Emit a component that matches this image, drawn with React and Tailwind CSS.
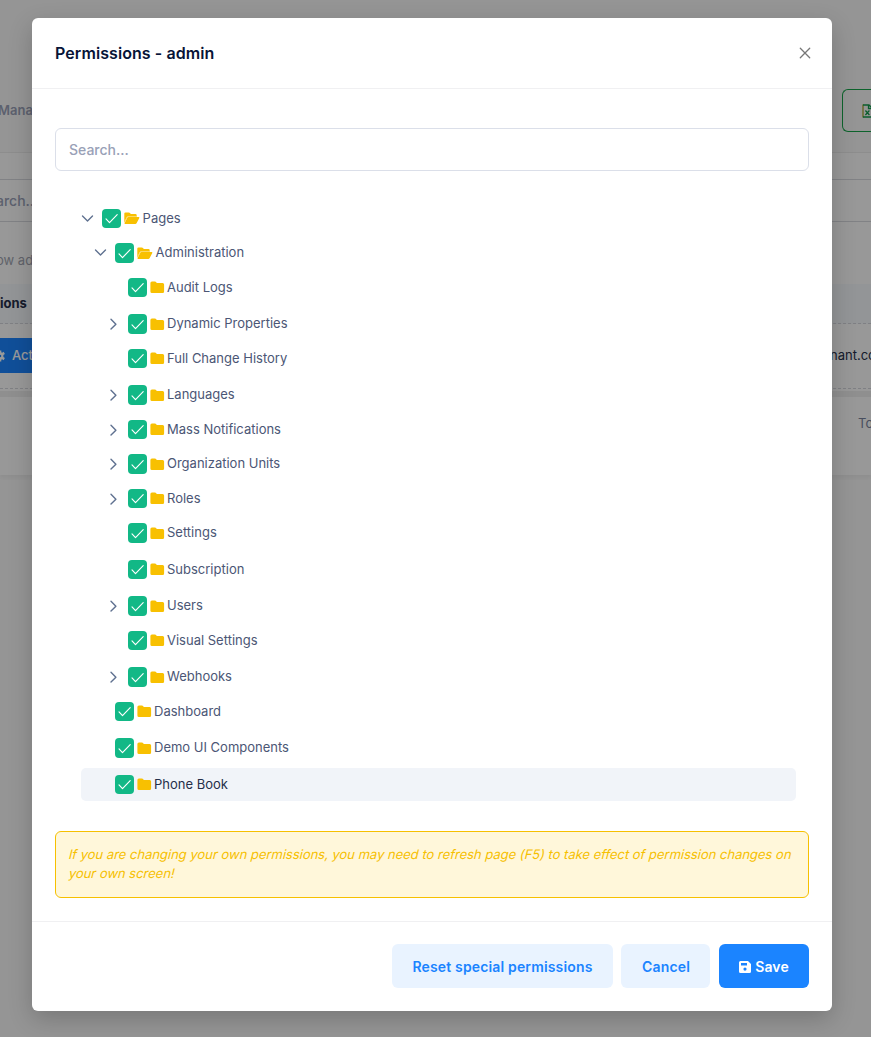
import React from "react";

const rows = [
  { label: "Pages", depth: "pl-0", h: "h-[34px]", box: "h-[19px]", state: "open" },
  { label: "Administration", depth: "pl-[13px]", h: "h-[35px]", box: "h-5", state: "open" },
  { label: "Audit Logs", depth: "pl-[26px]", h: "h-[36px]", box: "h-[19px]", state: "leaf" },
  { label: "Dynamic Properties", depth: "pl-[26px]", h: "h-[35px]", box: "h-5", state: "closed" },
  { label: "Full Change History", depth: "pl-[26px]", h: "h-[36px]", box: "h-[19px]", state: "leaf" },
  { label: "Languages", depth: "pl-[26px]", h: "h-[35px]", box: "h-5", state: "closed" },
  { label: "Mass Notifications", depth: "pl-[26px]", h: "h-[34px]", box: "h-[19px]", state: "closed" },
  { label: "Organization Units", depth: "pl-[26px]", h: "h-[35px]", box: "h-5", state: "closed" },
  { label: "Roles", depth: "pl-[26px]", h: "h-[34px]", box: "h-[19px]", state: "closed" },
  { label: "Settings", depth: "pl-[26px]", h: "h-[37px]", box: "h-5", state: "leaf" },
  { label: "Subscription", depth: "pl-[26px]", h: "h-[36px]", box: "h-[19px]", state: "leaf" },
  { label: "Users", depth: "pl-[26px]", h: "h-[35px]", box: "h-5", state: "closed" },
  { label: "Visual Settings", depth: "pl-[26px]", h: "h-[36px]", box: "h-[19px]", state: "leaf" },
  { label: "Webhooks", depth: "pl-[26px]", h: "h-[35px]", box: "h-5", state: "closed" },
  { label: "Dashboard", depth: "pl-[13px]", h: "h-[36px]", box: "h-[19px]", state: "leaf" },
  { label: "Demo UI Components", depth: "pl-[13px]", h: "h-[30px]", box: "h-5", state: "leaf" },
];

function Arrow({ state }) {
  if (state === "leaf") return <span className="w-[21px] shrink-0" />;
  return (
    <svg className="mr-2 h-[19px] w-[13px] shrink-0" viewBox="0 0 13 19" fill="none" stroke="#5f7190" strokeWidth="1.4" strokeLinecap="round" strokeLinejoin="round">
      {state === "open" ? <path d="M1.500 7l5 5 5-5" /> : <path d="M4 5.300l4.900 4.900L4 15.100" />}
    </svg>
  );
}

function Folder({ open, tall }) {
  const top = tall ? "mt-[4px] " : "mt-[3px] ";
  return open ? (
    <svg className={top + "ml-[3px] h-[13px] w-4 shrink-0"} viewBox="0 0 16 13">
      <path fill="#f8c001" d="M.3 10.700V1.600Q.3.400 1.500.400h3.100q.6 0 1 .4L6.900 2h4.600q1.200 0 1.200 1.200v1.200H4.500Q3.300 4.400 2.700 5.500z" />
      <path fill="#fbd968" d="M12.700 4H4.500Q3.200 4 2.600 5.200L.3 9.400v1.300l3-4.900q.4-.7 1.300-.7h8.100z" />
      <path fill="#f8c001" d="M4.600 5h10.100q1 0 .6.900l-2.600 5q-.5 1-1.500 1H1.200q-1.100 0-.6-1l2.600-5Q3.700 5 4.600 5z" />
    </svg>
  ) : (
    <svg className={top + "ml-[3px] h-[13px] w-[15px] shrink-0"} viewBox="0 0 15 13">
      <path fill="#f8c001" d="M.4 1.900Q.4.400 1.900.400h2.800q.6 0 1 .4L6.900 2h5.700q1.500 0 1.500 1.500v7q0 1.500-1.500 1.500H1.900Q.4 12 .4 10.500z" />
    </svg>
  );
}

function NodeContent({ row }) {
  return (
    <>
      <Arrow state={row.state} />
      <span className={"flex w-[19px] shrink-0 items-center justify-center rounded-[4px] bg-[#12b886] " + row.box}>
        <svg className="h-[19px] w-[19px]" viewBox="0 0 19 19" fill="none" stroke="#fff" strokeWidth="1.15" strokeLinecap="round" strokeLinejoin="round">
          <path d="M4 9.900l3.500 3.700L15.200 5.700" />
        </svg>
      </span>
      <Folder open={row.state === "open"} tall={row.box === "h-5"} />
      <span className={"text-[13px] leading-[19px] " + (row.state === "open" ? "ml-[2.6px]" : "ml-[2px]")}>{row.label}</span>
    </>
  );
}

function Backdrop() {
  return (
    <div className="flex h-full flex-col bg-[#f9f9f9] text-[13px]">
      <div className="flex h-[152px] items-start justify-between pt-[89px]">
        <span className="-ml-[2px] pt-[11px] font-semibold leading-5 text-[#99a1b7]">Mana</span>
        <span className="flex h-[43px] w-[29px] shrink-0 items-center overflow-hidden rounded-l-md border border-r-0 border-[#17a64a] pl-[19px]">
          <svg className="h-[14px] w-[11px] shrink-0" viewBox="0 0 11 14" fill="none" stroke="#129b4c" strokeWidth="1.3">
            <path stroke="#a3a531" d="M1 .5v13" />
            <path d="M1 1h6l3 3v9H1" />
            <path d="M6.500 1v3.500H10" />
            <path d="M3.400 6.500l4 4.500m0-4.500l-4 4.500" />
          </svg>
        </span>
      </div>
      <div className="flex h-[323px] shrink-0 flex-col border-t border-[#ececec] bg-[#fefefe] shadow-[0_3px_4px_rgba(0,0,0,0.05)]">
        <div className="mt-[26px] flex h-[43px] items-center border-y border-[#d8d9de] font-medium text-[#99a1b7]">
          <span className="-ml-[4px] text-[14px]">arch..</span>
        </div>
        <div className="h-[62px] pt-[28px] leading-5 text-[#a0a4b0]">
          <span className="-ml-[4px]">ow ad</span>
        </div>
        <div className="flex h-10 items-center border-b border-dashed border-[#d4d6dc] bg-[#f5f8fc] font-bold text-[#252f4a]">
          <span>ions</span>
        </div>
        <div className="flex h-[65px] items-center justify-between border-b border-dashed border-[#d4d6dc]">
          <span className="mb-px flex h-[35px] w-[110px] items-center bg-[#1b84ff] font-medium text-white">
            <svg className="mr-[7px] h-3 w-[5px]" viewBox="6 0 5 12" fill="#fff">
              <path d="M6 .5h1.300v1.800l.8.4 1.500-.9 1.300 2.100-1.500 1v2.200l1.500 1-1.300 2.100-1.500-.9-.8.4v1.800H6V7.300a1.300 1.300 0 000-2.600z" />
            </svg>
            Actions
          </span>
          <span className="w-[41px] whitespace-nowrap text-[#252f4a]">nant.co</span>
        </div>
        <div className="mt-[2px] h-[6px] shrink-0 bg-[#efefef]" />
        <div className="flex justify-end pt-4 leading-5 text-[#78829d]">
          <span className="w-[13px]">To</span>
        </div>
      </div>
    </div>
  );
}

export default function App() {
  return (
    <div className="relative h-[1037px] w-[871px] overflow-hidden font-['Inter',sans-serif]">
      <Backdrop />
      <div className="absolute inset-0 bg-black/40 px-8 pt-[18px]">
        <section className="flex h-[993px] w-[800px] flex-col rounded-md bg-white shadow-[0_8px_24px_rgba(0,0,0,0.2)]">
          <header className="flex h-[71px] shrink-0 items-center justify-between border-b border-[#f0f0f2] pl-[23px] pr-[21px]">
            <h1 className="text-[16px] font-semibold leading-6 tracking-[0.08px] text-[#071437]">Permissions - admin</h1>
            <svg className="h-3 w-3" viewBox="0 0 12 12" fill="none" stroke="#777" strokeWidth="1.3" strokeLinecap="round">
              <path d="M1.300 1.300l9.400 9.400m0-9.400l-9.400 9.400" />
            </svg>
          </header>
          <main className="flex h-[832px] shrink-0 flex-col px-[23px] pt-[39px]">
            <input className="h-[43px] w-full shrink-0 rounded-md border border-[#dbdfe9] px-[13px] text-[14px] font-medium placeholder:text-[#99a1b7]" placeholder="Search..." />
            <div className="ml-[26px] mr-[13px] mt-[38px] text-[#4b5675]">
              {rows.map((row) => (
                <div key={row.label} className={"flex items-start " + row.h + " " + row.depth}>
                  <NodeContent row={row} />
                </div>
              ))}
              <div className="flex h-[33px] items-start rounded-[5px] bg-[#f1f4f9] pl-[13px] pt-[7px] text-[#252f4a]">
                <NodeContent row={{ label: "Phone Book", box: "h-[19px]", state: "leaf" }} />
              </div>
            </div>
            <div className="mt-[30px] h-[67px] shrink-0 rounded-md border border-[#f6c000] bg-[#fff7da] px-[13px] pt-[13px] text-[13px] leading-[19px] tracking-[-0.015px] text-[#f6c000]">
              <span className="block -skew-x-[14deg] whitespace-nowrap">
                If you are changing your own permissions, you may need to refresh page (F5) to take effect of permission changes on
              </span>
              <span className="block -skew-x-[14deg]">your own screen!</span>
            </div>
          </main>
          <footer className="flex grow items-start justify-end border-t border-[#f0f0f2] pr-[23px] pt-[22px] text-[14px] font-semibold">
            <button className="mr-2 h-[44px] w-[221px] rounded-md bg-[#e9f3ff] tracking-[0.15px] text-[#1b84ff]">Reset special permissions</button>
            <button className="mr-[9px] h-[44px] w-[89px] rounded-md bg-[#e9f3ff] pl-px tracking-[0.15px] text-[#1b84ff]">Cancel</button>
            <button className="flex h-[44px] w-[90px] items-center justify-center gap-[4px] rounded-md bg-[#1b84ff] tracking-[0.15px] text-white">
              <svg className="mt-px h-3 w-3" viewBox="0 0 12 12" fill="#fff" fillRule="evenodd">
                <path d="M1.500 0H9l3 3v7.500q0 1.500-1.500 1.500h-9Q0 12 0 10.500v-9Q0 0 1.500 0zM2 2v2.500h6V2zM6 6.500a1.600 1.600 0 100 3.200 1.600 1.600 0 000-3.200z" />
              </svg>
              Save
            </button>
          </footer>
        </section>
      </div>
    </div>
  );
}
